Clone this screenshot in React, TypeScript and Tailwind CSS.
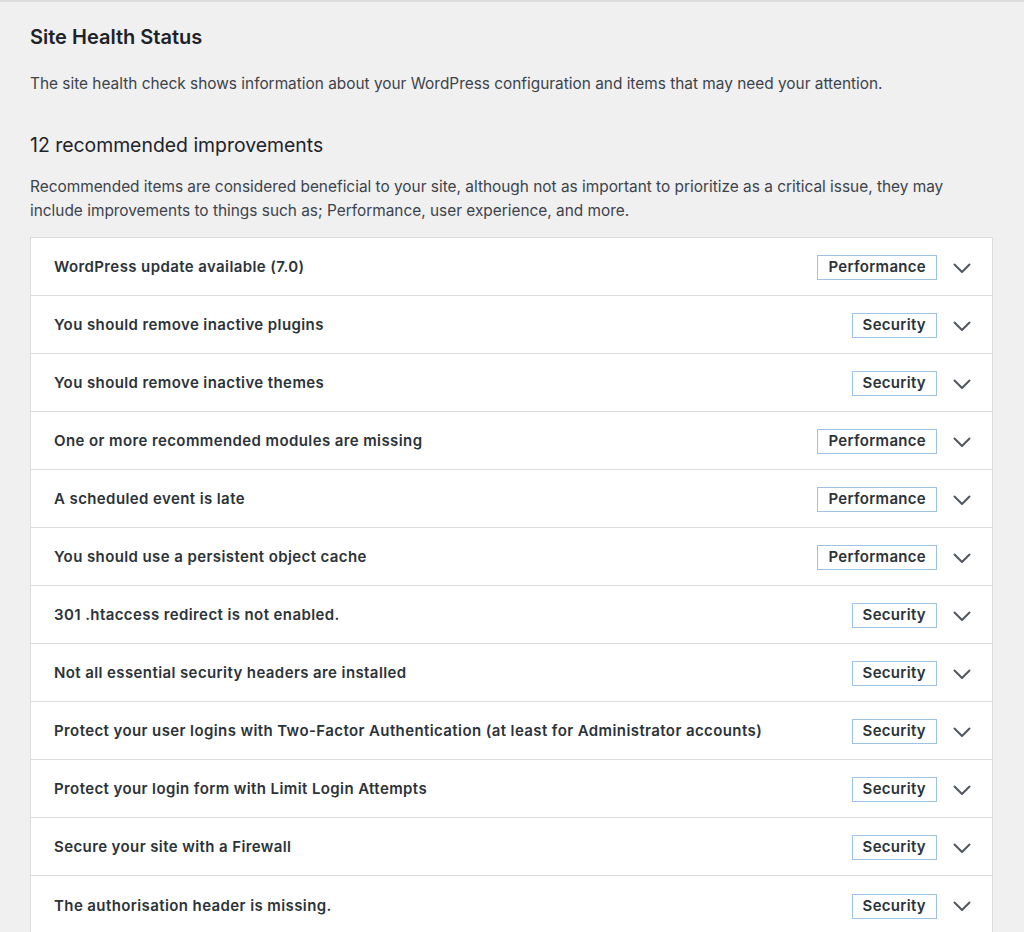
type Item = { label: string; badge: 'Performance' | 'Security' };

const items: Item[] = [
  { label: 'WordPress update available (7.0)', badge: 'Performance' },
  { label: 'You should remove inactive plugins', badge: 'Security' },
  { label: 'You should remove inactive themes', badge: 'Security' },
  { label: 'One or more recommended modules are missing', badge: 'Performance' },
  { label: 'A scheduled event is late', badge: 'Performance' },
  { label: 'You should use a persistent object cache', badge: 'Performance' },
  { label: '301 .htaccess redirect is not enabled.', badge: 'Security' },
  { label: 'Not all essential security headers are installed', badge: 'Security' },
  { label: 'Protect your user logins with Two-Factor Authentication (at least for Administrator accounts)', badge: 'Security' },
  { label: 'Protect your login form with Limit Login Attempts', badge: 'Security' },
  { label: 'Secure your site with a Firewall', badge: 'Security' },
  { label: 'The authorisation header is missing.', badge: 'Security' },
];

function Chevron() {
  return (
    <svg width="18" height="12" viewBox="0 0 18 12" className="ml-[16px] text-[#50575e]" fill="none">
      <path d="M1.5 2.5l7.5 7.5 7.5-7.5" stroke="currentColor" strokeWidth="2" strokeLinecap="round" strokeLinejoin="round" />
    </svg>
  );
}

export default function App() {
  return (
    <div className="h-[932px] overflow-hidden bg-[#f0f0f1] border-t-2 border-[#dcdcde] pl-[30px] pr-[31px] font-['Inter',sans-serif] text-[#3c434a]">
      {/* Header */}
      <h1 className="mt-[21px] text-[20px] leading-[28px] font-semibold text-[#1d2327]">Site Health Status</h1>
      <p className="mt-[21px] text-[15.4px] leading-[24px]">
        The site health check shows information about your WordPress configuration and items that may need your attention.
      </p>

      <h2 className="mt-[35px] text-[19.4px] leading-[28px] font-normal text-[#1d2327]">12 recommended improvements</h2>
      <p className="mt-[16px] text-[15.4px] leading-[24px]">
        Recommended items are considered beneficial to your site, although not as important to prioritize as a critical issue, they may include improvements to things such as; Performance, user experience, and more.
      </p>

      {/* Issues list */}
      <div className="mt-[14px] bg-white border border-[#dcdcde]">
        {items.map((item, i) => (
          <div
            key={i}
            className="h-[58px] flex items-center pt-[2px] pl-[23px] pr-[21px] border-b border-[#dcdcde] last:border-b-0"
          >
            <span className="flex-1 text-[15px] tracking-[0.4px] font-semibold text-[#2c3338]">{item.label}</span>
            <span className="h-[25px] px-[10px] flex items-center border border-[#9ec2e6] text-[15px] tracking-[0.3px] font-semibold text-[#2c3338]">
              {item.badge}
            </span>
            <Chevron />
          </div>
        ))}
      </div>
    </div>
  );
}
